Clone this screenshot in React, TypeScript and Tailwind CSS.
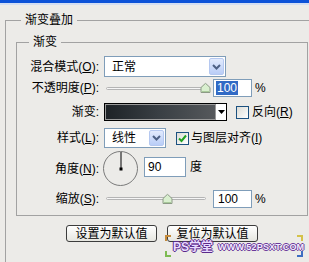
import React from 'react';

const font = { fontFamily: '"Liberation Sans", "Noto Sans CJK SC", sans-serif' };

function Chevron() {
  return (
    <svg width="9" height="6" viewBox="0 0 9 6">
      <path d="M1 1 L4.5 4.5 L8 1" fill="none" stroke="#4d6185" strokeWidth="2" />
    </svg>
  );
}

function Select({ value, width }: { value: string; width: string }) {
  return (
    <div className={`ml-[5px] flex h-full items-center border border-[#7f9db9] bg-white ${width}`}>
      <span className="flex-1 pl-[7px]">{value}</span>
      <div className="mr-px flex h-[calc(100%-2px)] w-[15px] items-center justify-center rounded-[2px] border border-[#b5c8f0] bg-gradient-to-b from-[#e2ebfd] to-[#b9cdf7]">
        <Chevron />
      </div>
    </div>
  );
}

function Label({ children }: { children: React.ReactNode }) {
  return <div className="w-[82px] shrink-0 text-right">{children}</div>;
}

function Slider({ pos }: { pos: number }) {
  return (
    <div className="relative ml-[4px] flex h-full w-[108px] items-center">
      <div className="ml-[3px] h-[3px] w-[100px] rounded-full border border-[#b4b4b4] bg-[#f6f6f6]" />
      <svg
        className="absolute top-1/2 -translate-y-1/2"
        style={{ left: pos }}
        width="11"
        height="11"
        viewBox="0 0 11 11"
      >
        <path d="M1 10 L1 5 L5.5 0.8 L10 5 L10 10 Z" fill="#d9efcf" stroke="#8c9a86" />
        <path d="M2 9 L9 9" stroke="#a8c99a" />
      </svg>
    </div>
  );
}

function Box({ value, width, selected }: { value: string; width: string; selected?: boolean }) {
  return (
    <div className={`flex h-[18px] items-center border border-[#7f9db9] bg-white pl-[2px] ${width}`}>
      {selected ? <span className="bg-[#316ac5] px-px text-white">{value}</span> : <span className="pl-[2px]">{value}</span>}
    </div>
  );
}

function Check({ checked }: { checked?: boolean }) {
  return (
    <div className="flex h-[13px] w-[13px] items-center justify-center border border-[#1c5180] bg-gradient-to-br from-[#dcdcd6] to-white">
      {checked && (
        <svg width="9" height="9" viewBox="0 0 9 9">
          <path d="M1 4.5 L3.5 7 L8 1.5" fill="none" stroke="#21a121" strokeWidth="2" />
        </svg>
      )}
    </div>
  );
}

function Corner({ cls }: { cls: string }) {
  return <div className={`absolute h-[6px] w-[6px] border-2 ${cls}`} />;
}

export default function App() {
  return (
    <div className="relative h-[262px] w-[309px] overflow-hidden bg-[#ecebe8] text-[12px] leading-[14px] text-black" style={font}>
      <div className="h-[3px] bg-[#0c52d8]" />
      <div className="h-[2px] bg-[#d3def2]" />
      <fieldset className="ml-[5px] mt-[8px] h-[300px] w-[330px] border border-[#a2a2a2]">
        <legend className="ml-[15px] px-[4px]">渐变叠加</legend>
        <fieldset className="ml-[10px] mt-[8px] h-[181px] w-[292px] border border-[#a2a2a2]">
          <legend className="ml-[12px] px-[4px]">渐变</legend>

          <div className="mt-[7px] flex h-[21px] items-center">
            <Label>混合模式(<u>O</u>):</Label>
            <Select value="正常" width="w-[122px]" />
          </div>

          <div className="mt-[2px] flex h-[18px] items-center">
            <Label>不透明度(<u>P</u>):</Label>
            <Slider pos={97} />
            <div className="ml-[2px]">
              <Box value="100" width="w-[39px]" selected />
            </div>
            <span className="ml-[3px]">%</span>
          </div>

          <div className="mt-[6px] flex h-[18px] items-center">
            <Label>渐变:</Label>
            <div className="ml-[5px] flex h-[18px] w-[123px] border border-black">
              <div className="flex-1 border border-[#9a9a9a] bg-gradient-to-r from-[#1e2327] via-[#3a4045] to-[#56595c]" />
              <div className="flex w-[10px] items-center justify-center bg-white">
                <svg width="7" height="4" viewBox="0 0 7 4">
                  <path d="M0 0 L7 0 L3.5 4 Z" fill="#000" />
                </svg>
              </div>
            </div>
            <div className="ml-[9px]">
              <Check />
            </div>
            <span className="ml-[3px]">反向(<u>R</u>)</span>
          </div>

          <div className="mt-[7px] flex h-[20px] items-center">
            <Label>样式(<u>L</u>):</Label>
            <Select value="线性" width="w-[62px]" />
            <div className="ml-[10px]">
              <Check checked />
            </div>
            <span className="ml-[2px]">与图层对齐(<u>I</u>)</span>
          </div>

          <div className="mt-[3px] flex h-[36px] items-start">
            <div className="mt-[11px]">
              <Label>角度(<u>N</u>):</Label>
            </div>
            <div className="relative ml-[4px] h-[35px] w-[35px] rounded-full border-[1.5px] border-[#7a7a7a]">
              <div className="absolute left-1/2 top-0 h-1/2 w-px -translate-x-1/2 bg-black" />
              <div className="absolute left-1/2 top-1/2 h-[3px] w-[3px] -translate-x-1/2 -translate-y-1/2 bg-black" />
            </div>
            <div className="ml-[6px] mt-[6px] flex h-[20px] w-[42px] items-center border border-[#7f9db9] bg-white pl-[3px]">90</div>
            <span className="ml-[4px] mt-[9px]">度</span>
          </div>

          <div className="mt-[2px] flex h-[19px] items-center">
            <Label>缩放(<u>S</u>):</Label>
            <Slider pos={59} />
            <div className="ml-[2px]">
              <Box value="100" width="w-[39px]" />
            </div>
            <span className="ml-[3px]">%</span>
          </div>
        </fieldset>

        <div className="ml-[60px] mt-[9px] flex gap-[10px]">
          <button className="flex h-[17px] w-[91px] items-center justify-center rounded-[3px] border border-[#3c3c3c] bg-gradient-to-b from-white to-[#e6e6e0]">
            设置为默认值
          </button>
          <button className="flex h-[17px] w-[91px] items-center justify-center rounded-[3px] border border-[#3c3c3c] bg-gradient-to-b from-white to-[#e6e6e0]">
            复位为默认值
          </button>
        </div>
      </fieldset>

      <div className="absolute left-[165px] top-[235px] h-[22px] w-[138px]">
        <Corner cls="left-0 top-0 border-b-0 border-r-0 border-[#c58a3a]" />
        <Corner cls="left-0 bottom-0 border-t-0 border-r-0 border-[#7dbb52]" />
        <Corner cls="right-0 top-0 border-b-0 border-l-0 border-[#d4c24a]" />
        <Corner cls="right-0 bottom-0 border-t-0 border-l-0 border-[#3e6ec2]" />
        <div className="flex items-center whitespace-nowrap pl-[8px] pt-[5px]">
          <span className="shrink-0 text-[12px] font-bold leading-[14px] text-[#e9dcff] [text-shadow:1px_0_#5a2a8a,-1px_0_#5a2a8a,0_1px_#5a2a8a,0_-1px_#5a2a8a]">
            PS学堂
          </span>
          <span className="ml-[5px] shrink-0 text-[9px] font-bold leading-[10px] tracking-[0.2px] text-[#f3ecff] [text-shadow:1px_0_#6b3a9a,-1px_0_#6b3a9a,0_1px_#6b3a9a,0_-1px_#6b3a9a]">
            WWW.52PSXT.COM
          </span>
        </div>
      </div>
    </div>
  );
}
